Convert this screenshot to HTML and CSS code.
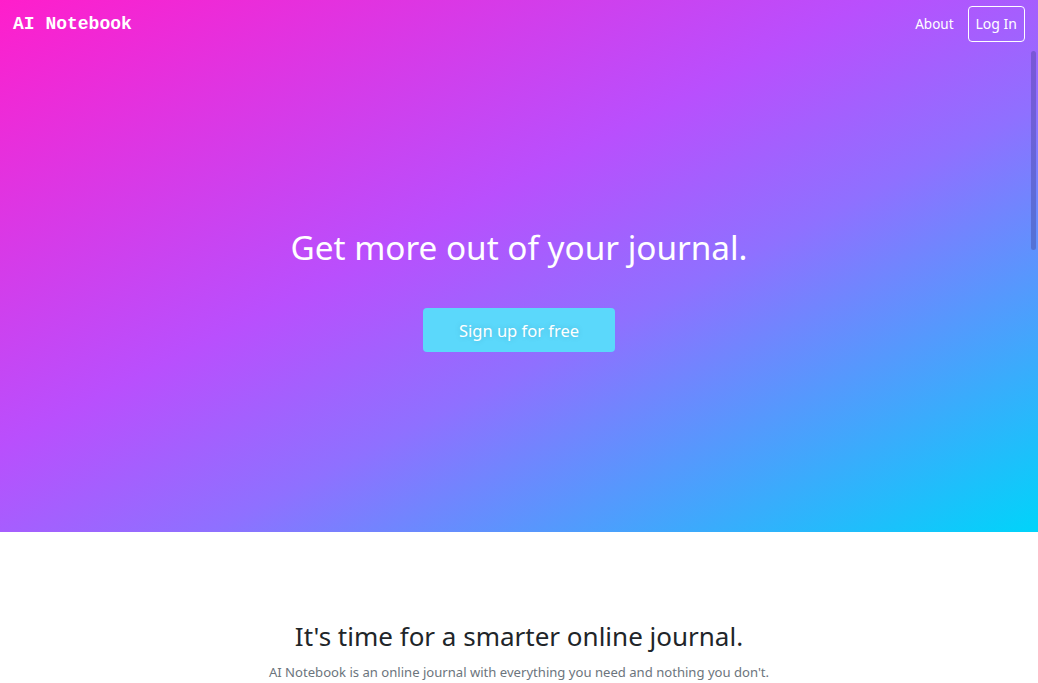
FILE: index.html
```html
<!DOCTYPE html>
<html>
<head>
<meta charset="utf-8">
<link rel="stylesheet" href="styles.css">
</head>
<body>
<section class="hero">
  <nav class="nav">
    <div class="brand">AI Notebook</div>
    <div class="links">
      <a class="link">About</a>
      <a class="login">Log In</a>
    </div>
  </nav>
  <div class="hero-body">
    <h1 class="title">Get more out of your journal.</h1>
    <a class="signup">Sign up for free</a>
  </div>
  <div class="thumb"></div>
</section>
<section class="intro">
  <h2 class="intro-title">It's time for a smarter online journal.</h2>
  <p class="intro-text">AI Notebook is an online journal with everything you need and nothing you don't.</p>
</section>
</body>
</html>
```
FILE: styles.css
```css
html, body { margin: 0; padding: 0; }
body { font-family: "Noto Sans", "Open Sans", sans-serif; background: #fff; overflow: hidden; }
.hero {
  position: relative;
  height: 532px;
  background: linear-gradient(to bottom right, #ff1ecb 0%, #b94ffd 42%, #8f70ff 60%, #00d4fa 100%);
  display: flex;
  flex-direction: column;
  color: #fff;
}
.nav { display: flex; justify-content: space-between; align-items: center; padding: 6px 13px 0 13px; height: 36px; }
.brand { font-family: "Liberation Mono", monospace; font-weight: bold; font-size: 18px; padding-bottom: 1px; }
.links { display: flex; align-items: center; gap: 14px; }
.link { font-size: 13.5px; }
.login { font-size: 14px; border: 1px solid #fff; border-radius: 4px; padding: 7px 7px; line-height: 20px; }
.hero-body { flex: 1; display: flex; flex-direction: column; align-items: center; padding-top: 182px; }
.title { font-weight: 400; font-size: 33.3px; margin: 0; line-height: 46px; }
.signup { margin-top: 38px; width: 192px; height: 44px; background: #5bd8fb; border-radius: 4px; display: flex; align-items: center; justify-content: center; font-size: 16.5px; text-shadow: 0 0 6px rgba(0,0,0,0.15); }
.thumb { position: absolute; right: 2px; top: 51px; width: 5px; height: 199px; border-radius: 3px; background: rgba(60,60,140,0.35); }
.intro { display: flex; flex-direction: column; align-items: center; padding-top: 84px; color: #212529; }
.intro-title { font-weight: 400; font-size: 26px; margin: 0; line-height: 40px; }
.intro-text { margin: 7px 0 0; font-size: 13.1px; color: #6c757d; }
```
